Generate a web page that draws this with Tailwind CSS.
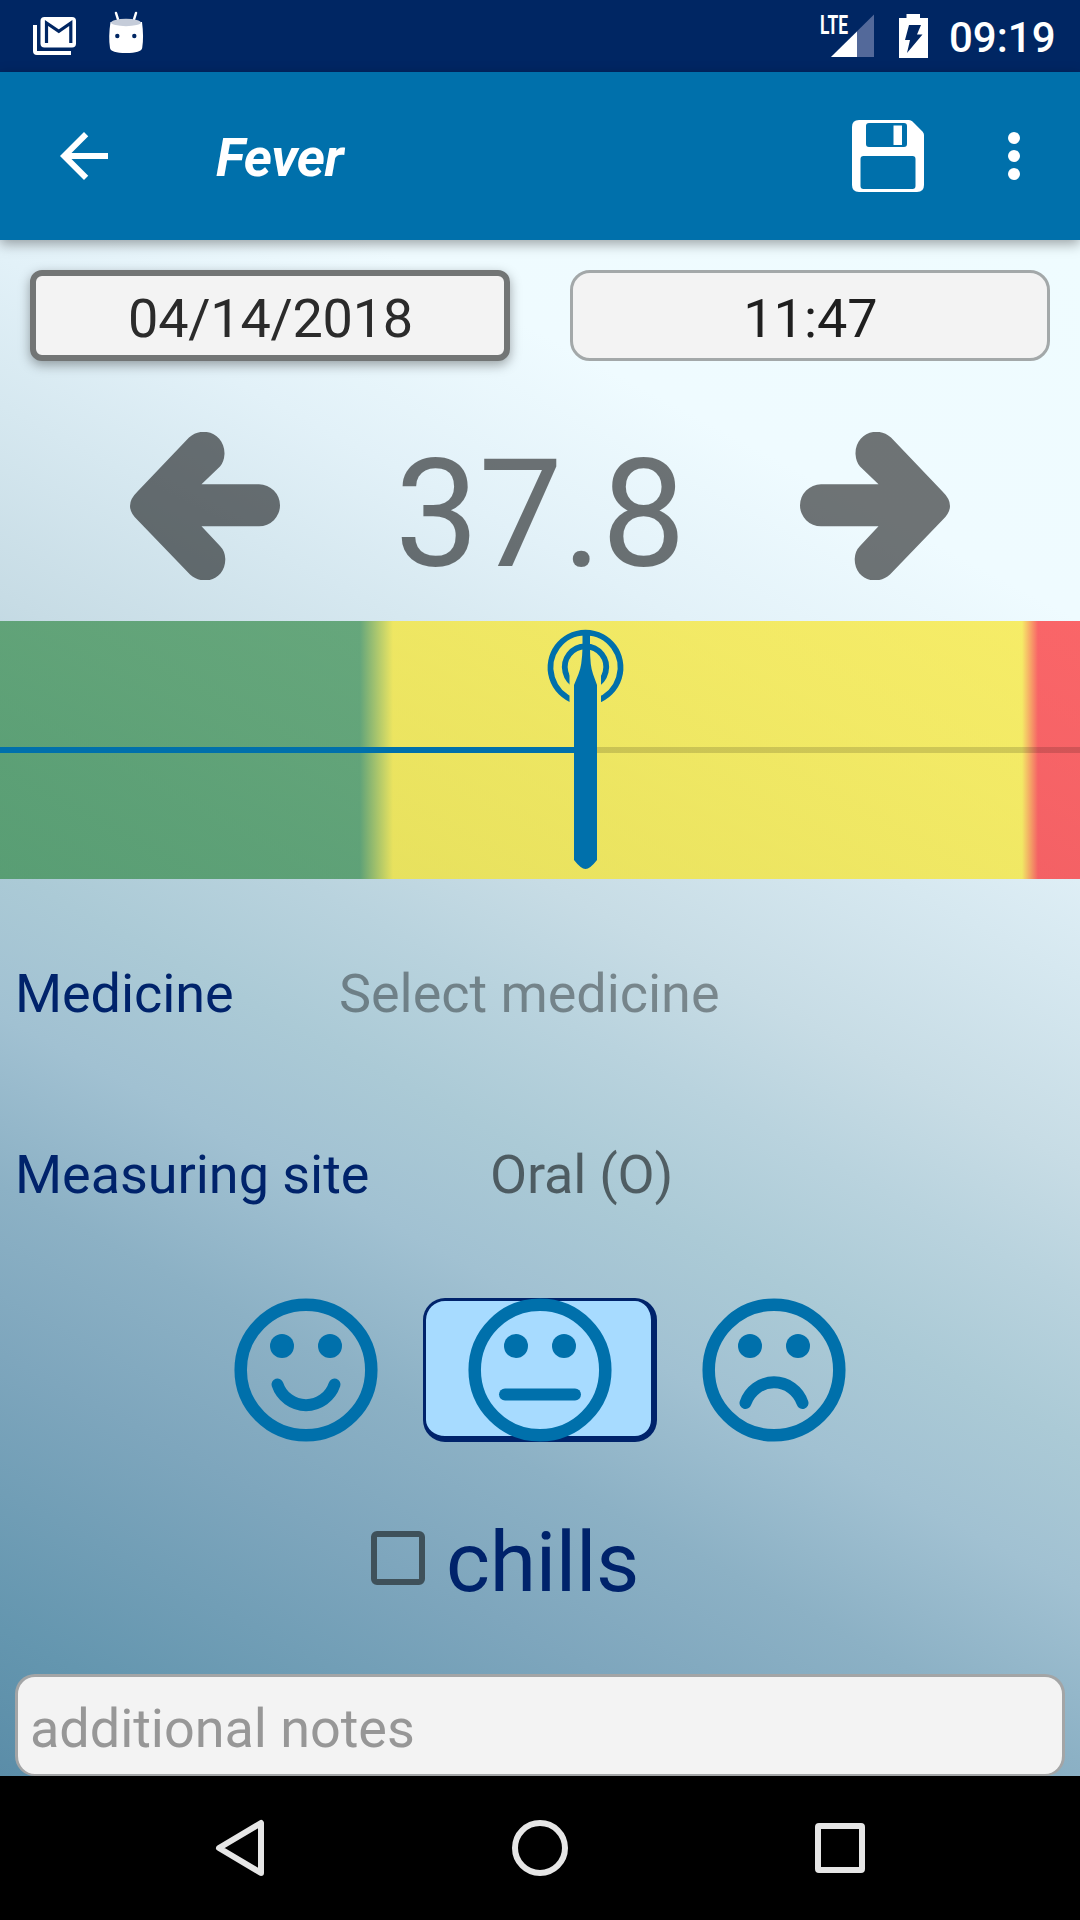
<!DOCTYPE html>
<html lang="en">
<head>
<meta charset="utf-8">
<title>Fever</title>
<script src="https://cdn.jsdelivr.net/npm/@tailwindcss/browser@4"></script>
</head>
<body class="flex h-[1920px] w-[1080px] flex-col overflow-hidden bg-black font-['Roboto',sans-serif] text-[54px] leading-[64px]">

<!-- Status bar -->
<header class="flex h-[72px] shrink-0 items-start justify-between bg-[#002663]">
  <svg class="h-[72px] w-[160px]" viewBox="0 0 160 72">
    <path fill="#fff" d="M33 25h4v26h34v4H37q-4 0-4-4z"/>
    <rect x="40.500" y="17" width="35.500" height="30.500" rx="4" fill="#fff"/>
    <path d="M46.500 43V23l12.300 8.300L70.800 23v20" fill="none" stroke="#002663" stroke-width="3.200"/>
    <path d="M116 13l2.500 8M136 13l-2.500 8" stroke="#fff" stroke-width="2.500" stroke-linecap="round"/>
    <path d="M110.500 22h31.500q2 15 .2 26q-1 5-16.200 5t-16-5q-1.800-11 .5-26z" fill="#fff"/>
    <ellipse cx="126" cy="22.500" rx="15" ry="3.700" fill="#c5ccd9"/>
    <circle cx="117.300" cy="36" r="2.200" fill="#002663"/><circle cx="134.300" cy="36" r="2.200" fill="#002663"/>
  </svg>
  <div class="flex items-start">
    <svg class="h-[72px] w-[120px]" viewBox="820 0 120 72">
      <path d="M874 14.500V57h-43z" fill="#53699a"/>
      <path d="M857 31.500V57h-26z" fill="#fff"/>
      <text x="820" y="33.800" font-size="26" font-weight="700" fill="#fff" textLength="28" lengthAdjust="spacingAndGlyphs">LTE</text>
      <path d="M899 18h7.500v-4h13.500v4h8v40h-29z" fill="#fff"/>
      <path d="M909 25h12l-4 9.500h5.500L907 53l3-13h-5z" fill="#002663"/>
    </svg>
    <div class="w-[140px] pt-[14px] pl-[9px] text-[42px] leading-[48px] font-medium text-white">09:19</div>
  </div>
</header>

<!-- App bar -->
<nav class="relative z-10 flex h-[168px] shrink-0 items-center bg-[#0070ab] pl-[48px] shadow-[0_4px_12px_rgba(0,0,0,0.35)]">
  <svg class="h-[72px] w-[72px]" viewBox="0 0 24 24" fill="#fff"><path d="M20 11H7.830l5.590-5.590L12 4l-8 8 8 8 1.410-1.410L7.830 13H20v-2z"/></svg>
  <h1 class="ml-[96px] flex-1 pt-[4px] text-[54px] font-bold tracking-[-0.5px] italic text-white">Fever</h1>
  <svg class="h-[72px] w-[72px]" viewBox="0 0 72 72">
    <path fill="#fff" fill-rule="evenodd" d="M7 0H57q2 0 3.500 1.500L70.500 11.500q1.500 1.500 1.500 3.500V65q0 7-7 7H7q-7 0-7-7V7Q0 0 7 0zM17 3q-3 0-3 3v18q0 3 3 3h35q3 0 3-3V6q0-3-3-3zM11.500 36q-3 0-3 3v27q0 3 3 3h49q3 0 3-3V39q0-3-3-3z"/>
    <path fill="#fff" d="M41.500 5.500h8.500V25h-8.500z"/>
  </svg>
  <svg class="mr-[30px] ml-[54px] h-[72px] w-[72px]" viewBox="0 0 24 24" fill="#fff"><circle cx="12" cy="6" r="2"/><circle cx="12" cy="12" r="2"/><circle cx="12" cy="18" r="2"/></svg>
</nav>

<main class="flex h-[1536px] shrink-0 flex-col bg-[linear-gradient(208deg,#effcff_0%,#effbff_18%,#e2f1f8_28%,#d6e8f0_35%,#c7dce5_44%,#b9d3de_50%,#abcad6_57%,#a1c1d2_64%,#8cb1c5_72%,#7ea6bd_80%,#6496af_93%,#5b8da8_100%)]">
  <!-- Date and time -->
  <div class="flex gap-[60px] px-[30px] pt-[30px]">
    <button class="h-[91px] w-[480px] rounded-[12px] border-[6px] border-[#727575] bg-[#f3f3f3] pt-[6px] pl-px tracking-[-0.25px] text-[#2b2b2b] shadow-[0_4px_12px_rgba(0,0,0,0.35)]">04/14/2018</button>
    <button class="h-[91px] w-[480px] rounded-[20px] border-[3px] border-[#a3a8a9] bg-[#f3f3f3] pt-[6px] pl-px text-[#1f1f1f]">11:47</button>
  </div>

  <!-- Temperature value -->
  <div class="flex h-[260px] items-start justify-between px-[130px] pt-[71px]">
    <svg class="h-[148px] w-[150px]" viewBox="130 432 150 148">
      <path id="arrow" fill="#000" fill-opacity=".54" d="M137.500 491.500L189 437.500C203 425 225 434 224.500 454Q224 462 220 466.500L201.500 484.300H259a21 21 0 0 1 0 42H201.500L220 546Q225 551 225.300 559C225.500 579 204 587 190 574.500L137.500 520Q122.500 506 137.500 491.500z"/>
    </svg>
    <div class="-mt-[5px] text-[150px] leading-[176px] tracking-[-0.5px] text-black/54">37.8</div>
    <svg class="h-[148px] w-[150px] -scale-x-100" viewBox="130 432 150 148"><use href="#arrow"/></svg>
  </div>

  <!-- Fever scale -->
  <div class="relative flex h-[258px] items-center bg-[linear-gradient(90deg,rgba(52,138,72,.69)_0,rgba(52,138,72,.69)_360px,rgba(250,230,32,.68)_393px,rgba(250,230,32,.68)_1022px,rgba(255,28,30,.67)_1038px)]">
    <div class="h-[6px] w-[586px] bg-[#0070ab]"></div>
    <div class="h-[6px] flex-1 bg-black/15"></div>
    <svg class="absolute top-0 left-[540px] h-[258px] w-[90px]" viewBox="540 621 90 258">
      <clipPath id="gap"><path d="M540 621H630V720H601V670H569.500V720H540z"/></clipPath>
      <g clip-path="url(#gap)" fill="none" stroke="#0070ab" stroke-width="5.800">
        <path d="M574 700.600A35 35 0 1 1 597 700.600"/>
        <path d="M577 685.900A20.700 20.700 0 1 1 594 685.900"/>
      </g>
      <path fill="#0070ab" d="M582.500 630h7.500v18q0 18 3 26l4 11V860Q590 869 585.500 869Q581 869 574 860V685l4.500-11q3.500-8 4-26z"/>
    </svg>
  </div>

  <!-- Medicine -->
  <div class="flex h-[182px] items-center pt-[48px] pl-[15px]">
    <span class="w-[324px] tracking-[-0.1px] text-[#00236b]">Medicine</span><span class="tracking-[-0.05px] text-black/38">Select medicine</span>
  </div>
  <!-- Measuring site -->
  <div class="flex h-[182px] items-center pt-[46px] pl-[15px]">
    <span class="w-[475px] tracking-[-0.05px] text-[#00236b]">Measuring site</span><span class="tracking-[-0.2px] text-black/54">Oral (O)</span>
  </div>

  <!-- Mood -->
  <div class="mt-[55px] flex h-[144px] justify-center">
    <svg class="h-[144px] w-[234px]" viewBox="-117 -72 234 144" fill="#0070ab" stroke="#0070ab" stroke-linecap="round">
      <circle r="65.300" fill="none" stroke-width="12.500"/><circle cx="-24" cy="-24" r="12" stroke="none"/><circle cx="24" cy="-24" r="12" stroke="none"/>
      <path d="M-28.500 14.500A30 30 0 0 0 28.500 14.500" fill="none" stroke-width="12"/>
    </svg>
    <div class="h-[144px] w-[234px] rounded-[22px] border-t-[3px] border-r-[6px] border-b-[6px] border-l-[3px] border-[#00236b] bg-[#a7dbff]">
      <svg class="-mt-[3px] -ml-[3px] h-[144px] w-[234px] max-w-none" viewBox="-117 -72 234 144" fill="#0070ab" stroke="#0070ab" stroke-linecap="round">
        <circle r="65.300" fill="none" stroke-width="12.500"/><circle cx="-24" cy="-24" r="12" stroke="none"/><circle cx="24" cy="-24" r="12" stroke="none"/>
        <path d="M-35 24.500H35" fill="none" stroke-width="12"/>
      </svg>
    </div>
    <svg class="h-[144px] w-[234px]" viewBox="-117 -72 234 144" fill="#0070ab" stroke="#0070ab" stroke-linecap="round">
      <circle r="65.300" fill="none" stroke-width="12.500"/><circle cx="-24" cy="-24" r="12" stroke="none"/><circle cx="24" cy="-24" r="12" stroke="none"/>
      <path d="M-28.500 33A30 30 0 0 1 28.500 33" fill="none" stroke-width="12"/>
    </svg>
  </div>

  <!-- Chills -->
  <label class="mt-[70px] flex h-[98px] items-start pl-[371px]">
    <span class="mt-[19px] h-[54px] w-[54px] rounded-[6px] border-[6px] border-[#3f515a]"></span>
    <span class="ml-[21px] pt-[2px] text-[84px] leading-[98px] tracking-[-0.3px] text-[#00236b]">chills</span>
  </label>

  <!-- Notes -->
  <div class="mx-[15px] mt-[64px] h-[102px] rounded-[20px] border-[3px] border-b-2 border-[#a3a5a6] bg-[#f3f3f3] pt-[20px] pl-[12px] tracking-[-0.05px] text-[#979797]">additional notes</div>
</main>

<!-- Navigation bar -->
<footer class="flex h-[144px] shrink-0 items-center justify-between px-[210px]">
  <svg class="h-[60px] w-[60px]" viewBox="210 1818 60 60"><path d="M261 1823v50L219 1848z" fill="none" stroke="#e6e6e6" stroke-width="6" stroke-linejoin="round"/></svg>
  <svg class="h-[60px] w-[60px]" viewBox="0 0 60 60"><circle cx="30" cy="30" r="25" fill="none" stroke="#e6e6e6" stroke-width="6"/></svg>
  <svg class="h-[60px] w-[60px]" viewBox="0 0 60 60"><rect x="8" y="8" width="44" height="44" rx="1" fill="none" stroke="#e6e6e6" stroke-width="6"/></svg>
</footer>
</body>
</html>
